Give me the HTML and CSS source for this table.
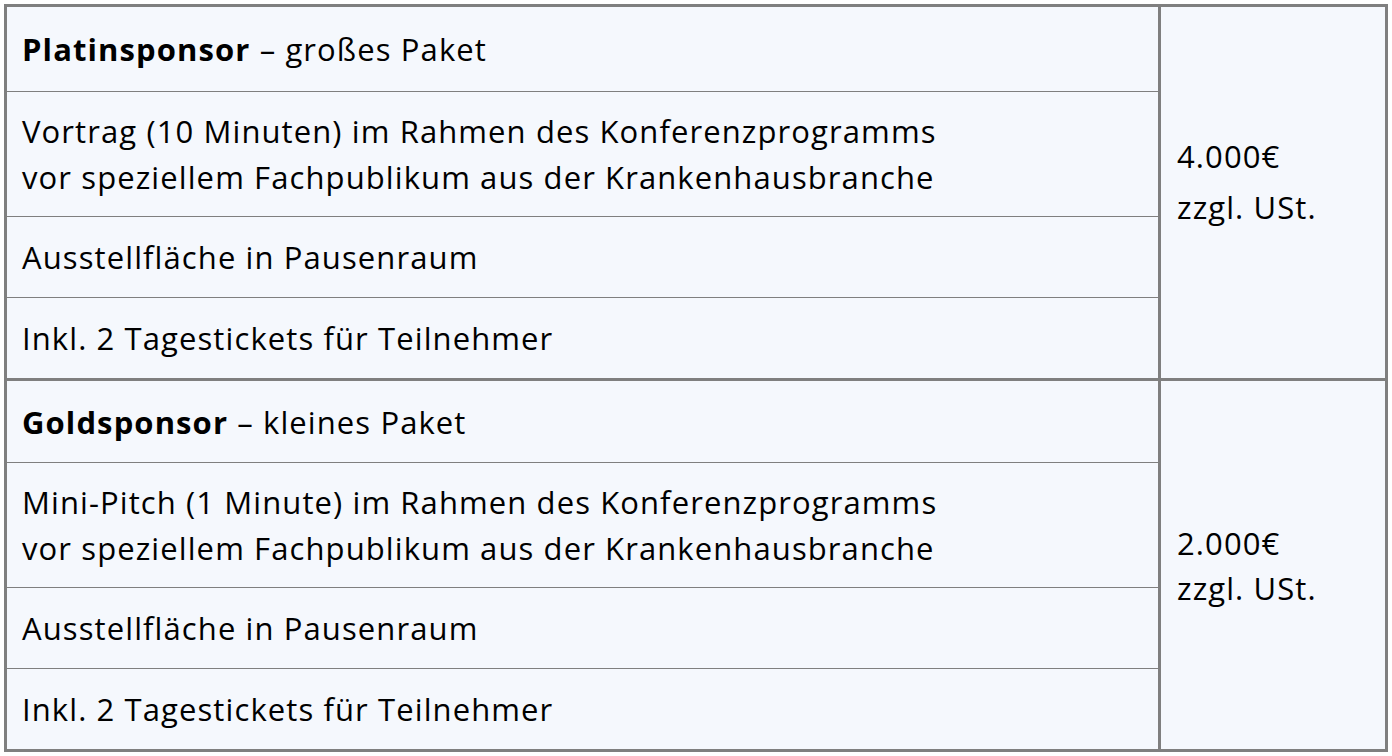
FILE: index.html
```html
<!DOCTYPE html>
<html lang="de">
<head>
<meta charset="utf-8">
<link rel="stylesheet" href="styles.css">
</head>
<body>
<div class="table">
  <div class="group g1">
    <div class="items">
      <div class="row r-title"><span><b>Platinsponsor</b> – großes Paket</span></div>
      <div class="row r-two"><span>Vortrag (10 Minuten) im Rahmen des Konferenzprogramms<br>vor speziellem Fachpublikum aus der Krankenhausbranche</span></div>
      <div class="row r-one"><span>Ausstellfläche in Pausenraum</span></div>
      <div class="row r-one last"><span>Inkl. 2 Tagestickets für Teilnehmer</span></div>
    </div>
    <div class="price p1">
      <div class="amount">4.000€</div>
      <div class="tax">zzgl. USt.</div>
    </div>
  </div>
  <div class="group g2">
    <div class="items">
      <div class="row r-title2"><span><b>Goldsponsor</b> – kleines Paket</span></div>
      <div class="row r-two"><span>Mini-Pitch (1 Minute) im Rahmen des Konferenzprogramms<br>vor speziellem Fachpublikum aus der Krankenhausbranche</span></div>
      <div class="row r-one"><span>Ausstellfläche in Pausenraum</span></div>
      <div class="row r-one last"><span>Inkl. 2 Tagestickets für Teilnehmer</span></div>
    </div>
    <div class="price p2">
      <div class="amount">2.000€</div>
      <div class="tax">zzgl. USt.</div>
    </div>
  </div>
</div>
</body>
</html>
```
FILE: styles.css
```css
html, body {
  margin: 0;
  padding: 0;
  background: #ffffff;
}
body {
  padding: 4px 0 0 4px;
  font-family: "Open Sans", "Noto Sans", sans-serif;
  color: #000;
}
.table {
  width: 1378px;
  border: 3px solid #7f7f7f;
  background: #f5f8fd;
}
.group {
  display: grid;
  grid-template-columns: 1151px 3px 223px;
}
.group.g1 {
  border-bottom: 3px solid #7f7f7f;
}
.items {
  display: flex;
  flex-direction: column;
  border-right: 3px solid #7f7f7f;
  grid-column: 1 / 3;
}
.row {
  display: flex;
  align-items: center;
  padding-left: 15px;
  border-bottom: 1px solid #7f7f7f;
  font-size: 31px;
  line-height: 46px;
  letter-spacing: 1.1px;
  white-space: nowrap;
}
.row.last {
  border-bottom: none;
}
.r-title { height: 84px; }
.r-title2 { height: 81px; }
.r-two { height: 124px; }
.r-one { height: 80px; }
.row b {
  font-weight: 700;
}
.price {
  grid-column: 3;
  padding-left: 16px;
  font-size: 31px;
  letter-spacing: 1.1px;
  display: flex;
  flex-direction: column;
  white-space: nowrap;
}
.p1 {
  padding-top: 126px;
  line-height: 46px;
}
.p1 .tax {
  margin-top: 5px;
}
.p2 {
  padding-top: 140px;
  line-height: 45px;
}
```
